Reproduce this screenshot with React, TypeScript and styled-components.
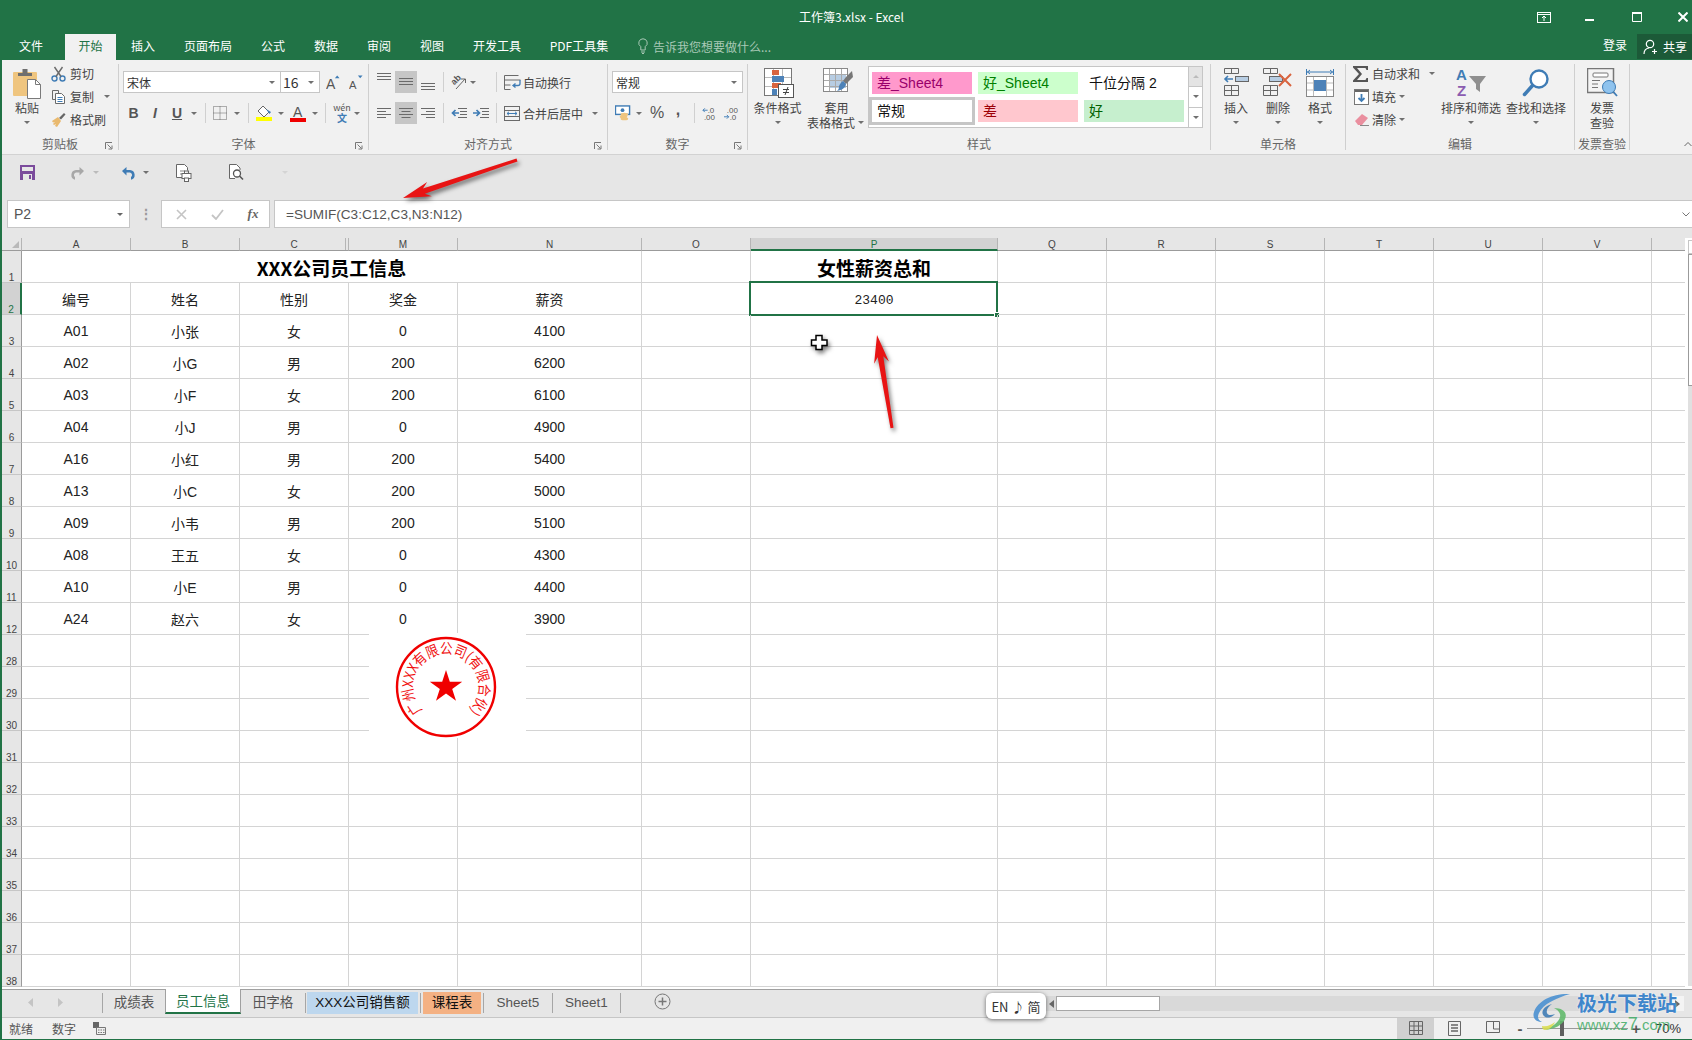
import React from "react";
import styled, { createGlobalStyle } from "styled-components";

const UI = `"Noto Sans CJK SC", "Liberation Sans", sans-serif`;
const CELL = `"Liberation Sans", "Noto Sans CJK SC", sans-serif`;
const GREEN = "#217346";

const Global = createGlobalStyle`
  html, body { margin: 0; padding: 0; overflow: hidden; background: #fff; }
  * { box-sizing: border-box; }
`;

const Win = styled.div`
  position: relative;
  width: 1692px;
  height: 1040px;
  overflow: hidden;
  border-left: 2px solid ${GREEN};
  font-family: ${UI};
  font-size: 12px;
  color: #444;
  background: #e6e6e6;
`;

/* ---------- title bar ---------- */
const Head = styled.header`
  background: ${GREEN};
  color: #fff;
  margin-left: -2px;
  padding-left: 2px;
`;
const TitleRow = styled.div`
  display: flex;
  align-items: center;
  height: 34px;
`;
const Title = styled.div`
  flex: 1;
  text-align: center;
  padding-left: 180px;
  line-height: 34px;
`;
const WinBtn = styled.span<{ $w: number; $ml?: number }>`
  display: inline-flex;
  flex: none;
  align-items: center;
  justify-content: center;
  height: 34px;
  width: ${(p) => p.$w}px;
  margin-left: ${(p) => p.$ml || 0}px;
`;
const TabsRow = styled.nav`
  display: flex;
  align-items: stretch;
  height: 26px;
`;
const MenuTab = styled.div<{ $w: number; $on?: boolean; $ml?: number }>`
  flex: none;
  width: ${(p) => p.$w}px;
  margin-left: ${(p) => p.$ml || 0}px;
  text-align: center;
  line-height: 23px;
  color: ${(p) => (p.$on ? GREEN : "#fff")};
  background: ${(p) => (p.$on ? "#f1f1f1" : "transparent")};
`;
const Tell = styled.div`
  display: flex;
  align-items: center;
  gap: 5px;
  margin-left: 16px;
  padding-bottom: 2px;
  color: #a9c9b6;
`;
const Login = styled.div`
  margin-left: auto;
  line-height: 22px;
  width: 44px;
  text-align: center;
`;
const Share = styled.div`
  display: flex;
  align-items: center;
  gap: 5px;
  width: 55px;
  height: 25px;
  padding-left: 6px;
  background: #1c5a38;
`;

/* ---------- ribbon ---------- */
const Ribbon = styled.section`
  display: flex;
  height: 95px;
  padding-top: 4px;
  background: #f1f1f1;
  border-bottom: 1px solid #d2d2d2;
`;
const Group = styled.div<{ $w: number }>`
  flex: none;
  display: flex;
  flex-direction: column;
  width: ${(p) => p.$w}px;
  height: 86px;
  border-right: 1px solid #cfcfcf;
`;
const Body = styled.div<{ $pl?: number; $pt?: number; $col?: boolean }>`
  display: flex;
  flex-direction: ${(p) => (p.$col ? "column" : "row")};
  gap: ${(p) => (p.$col ? "9px" : "0")};
  height: 72px;
  padding-left: ${(p) => p.$pl || 0}px;
  padding-top: ${(p) => p.$pt || 0}px;
`;
const Label = styled.div`
  position: relative;
  height: 14px;
  line-height: 15px;
  text-align: center;
  color: #666;
`;
const Launcher = styled.svg`
  position: absolute;
  right: 5px;
  top: 6px;
`;
const BigCol = styled.div<{ $w: number }>`
  flex: none;
  display: flex;
  flex-direction: column;
  align-items: center;
  width: ${(p) => p.$w}px;
  padding-top: 4px;
`;
const BigIcon = styled.div<{ $ml?: number }>`
  display: flex;
  align-items: flex-start;
  justify-content: center;
  height: 32px;
  margin-left: ${(p) => p.$ml || 0}px;
`;
const BigLine = styled.div`
  display: flex;
  align-items: center;
  justify-content: center;
  height: 15px;
  line-height: 15px;
  white-space: nowrap;
`;
const SmallCol = styled.div<{ $w: number; $pl: number }>`
  flex: none;
  display: flex;
  flex-direction: column;
  width: ${(p) => p.$w}px;
  padding-left: ${(p) => p.$pl}px;
  margin-top: -2px;
`;
const SmallRow = styled.div`
  display: flex;
  align-items: center;
  height: 23px;
  white-space: nowrap;
`;
const Row = styled.div`
  display: flex;
  align-items: center;
  height: 22px;
  white-space: nowrap;
`;
const Slot = styled.span<{ $w: number; $ml?: number; $on?: boolean }>`
  flex: none;
  display: inline-flex;
  align-items: center;
  justify-content: center;
  width: ${(p) => p.$w}px;
  height: 100%;
  margin-left: ${(p) => p.$ml || 0}px;
  background: ${(p) => (p.$on ? "#c6c6c6" : "transparent")};
`;
const Txt = styled.span<{ $ml?: number }>`
  margin-left: ${(p) => p.$ml || 0}px;
`;
const VSep = styled.span<{ $ml?: number }>`
  flex: none;
  width: 1px;
  height: 20px;
  margin-left: ${(p) => p.$ml || 0}px;
  background: #d0d0d0;
`;
const Caret = styled.i<{ $c?: string; $up?: boolean }>`
  display: inline-block;
  width: 0;
  height: 0;
  border-left: 3px solid transparent;
  border-right: 3px solid transparent;
  border-top: 3px solid ${(p) => p.$c || "#707070"};
  transform: ${(p) => (p.$up ? "rotate(180deg)" : "none")};
`;
const Combo = styled.div<{ $w: number; $ml?: number; $size?: boolean }>`
  flex: none;
  display: flex;
  align-items: center;
  justify-content: space-between;
  width: ${(p) => p.$w}px;
  height: 22px;
  margin-left: ${(p) => p.$ml || 0}px;
  padding: 0 5px 0 ${(p) => (p.$size ? "2px" : "3px")};
  background: #fff;
  border: 1px solid #c6c6c6;
  font-size: ${(p) => (p.$size ? "14px" : "12px")};
  color: #333;
`;
const Bold = styled.span<{ $i?: boolean; $u?: boolean }>`
  font: ${(p) => (p.$i ? "italic 700 14px" : "700 14px")} "Liberation Sans", sans-serif;
  text-decoration: ${(p) => (p.$u ? "underline" : "none")};
  color: #555;
`;
const PercentMark = styled.span`
  font: 16px "Liberation Sans", sans-serif;
  color: #555;
`;
const CommaMark = styled.span`
  font: 700 16px "Liberation Sans", sans-serif;
  color: #555;
  margin-top: -6px;
`;
const WenMark = styled.span`
  display: inline-flex;
  flex-direction: column;
  align-items: center;
  line-height: 9px;
  font-size: 9px;
  color: #555;
  & b { font-weight: 700; color: #3f7cb5; font-size: 10px; line-height: 11px; }
`;
const Gallery = styled.div`
  flex: none;
  display: flex;
  width: 335px;
  height: 62px;
  margin: 2px 0 0 2px;
  background: #fff;
  border: 1px solid #c6c6c6;
`;
const Styles = styled.div`
  flex: 1;
  display: grid;
  grid-template-columns: repeat(3, 100px);
  grid-auto-rows: 22px;
  gap: 6px;
  padding: 5px 0 0 3px;
`;
const StyleCell = styled.div<{ $bg: string; $fg: string; $frame?: boolean }>`
  padding-left: 5px;
  line-height: 22px;
  font-size: 14px;
  white-space: nowrap;
  font-family: ${CELL};
  background: ${(p) => p.$bg};
  color: ${(p) => p.$fg};
  box-shadow: ${(p) => (p.$frame ? "0 0 0 3px #c6c6c6" : "none")};
`;
const GalleryBar = styled.div`
  flex: none;
  display: flex;
  flex-direction: column;
  width: 14px;
  border-left: 1px solid #c6c6c6;
`;
const GalleryBtn = styled.div<{ $bg?: string }>`
  flex: 1;
  display: flex;
  align-items: center;
  justify-content: center;
  background: ${(p) => p.$bg || "#fff"};
  border-bottom: 1px solid #c6c6c6;
  &:last-child { border-bottom: 0; }
`;
const Collapse = styled.div`
  flex: 1;
  display: flex;
  justify-content: flex-end;
  align-items: flex-end;
  height: 86px;
  padding: 0 0 3px 0;
`;

/* ---------- quick access ---------- */
const Qat = styled.div`
  display: flex;
  align-items: center;
  height: 45px;
  padding-bottom: 10px;
  background: #e6e6e6;
`;
const QBtn = styled(Slot)`
  height: 20px;
`;

/* ---------- formula bar ---------- */
const FormulaRow = styled.div`
  display: flex;
  height: 28px;
  padding-left: 5px;
  margin-bottom: 10px;
  background: #e6e6e6;
`;
const NameBox = styled.div`
  flex: none;
  display: flex;
  align-items: center;
  justify-content: space-between;
  width: 123px;
  padding: 0 6px;
  background: #fff;
  border: 1px solid #c6c6c6;
  font: 14px "Liberation Sans", sans-serif;
  color: #555;
`;
const Dots = styled.div`
  flex: none;
  width: 31px;
  text-align: center;
  line-height: 26px;
  color: #9a9a9a;
  font-weight: 700;
  font-size: 14px;
`;
const FxBox = styled.div`
  flex: none;
  display: flex;
  align-items: center;
  width: 109px;
  background: #fff;
  border: 1px solid #c6c6c6;
`;
const FxMark = styled.span`
  font: italic 700 13px "Liberation Serif", serif;
  color: #666;
`;
const Formula = styled.div`
  flex: 1;
  margin-left: 4px;
  padding-left: 11px;
  display: flex;
  align-items: center;
  justify-content: space-between;
  padding-right: 2px;
  background: #fff;
  border-top: 1px solid #c6c6c6;
  border-bottom: 1px solid #c6c6c6;
  border-left: 1px solid #c6c6c6;
  font: 13.6px "Liberation Sans", sans-serif;
  color: #555;
`;

/* ---------- sheet ---------- */
const SheetWrap = styled.div`
  position: relative;
  display: flex;
  height: 752px;
  background: #fff;
  border-bottom: 1px solid #a0a0a0;
`;
const Grid = styled.div`
  flex: none;
  width: 1683px;
  height: 751px;
  overflow: hidden;
`;
const GridRow = styled.div<{ $h: number }>`
  display: flex;
  height: ${(p) => p.$h}px;
`;
const Corner = styled.div`
  position: relative;
  flex: none;
  width: 20px;
  background: #e6e6e6;
  border-right: 1px solid #b5b5b5;
  border-bottom: 1px solid #9b9b9b;
  &::after {
    content: "";
    position: absolute;
    right: 2px;
    bottom: 2px;
    border-left: 7px solid transparent;
    border-bottom: 7px solid #b9b9b9;
  }
`;
const ColHead = styled.div<{ $w: number; $on?: boolean; $dbl?: boolean }>`
  position: relative;
  flex: none;
  width: ${(p) => p.$w}px;
  text-align: center;
  font: 10px/14px "Liberation Sans", sans-serif;
  color: ${(p) => (p.$on ? GREEN : "#444")};
  background: ${(p) => (p.$on ? "#d2d2d2" : "#e6e6e6")};
  border-right: 1px solid #b5b5b5;
  border-bottom: ${(p) => (p.$on ? `2px solid ${GREEN}` : "1px solid #9b9b9b")};
  &::after {
    content: "";
    display: ${(p) => (p.$dbl ? "block" : "none")};
    position: absolute;
    right: 2px;
    top: 0;
    bottom: 0;
    width: 1px;
    background: #b5b5b5;
  }
`;
const RowHead = styled.div<{ $on?: boolean }>`
  flex: none;
  width: 20px;
  display: flex;
  align-items: flex-end;
  justify-content: center;
  font: 10px/9px "Liberation Sans", sans-serif;
  color: ${(p) => (p.$on ? GREEN : "#444")};
  background: ${(p) => (p.$on ? "#d2d2d2" : "#e6e6e6")};
  border-right: ${(p) => (p.$on ? `2px solid ${GREEN}` : "1px solid #9b9b9b")};
  border-bottom: 1px solid #c6c6c6;
`;
const Cell = styled.div<{ $w: number; $last?: boolean }>`
  position: relative;
  flex: none;
  display: flex;
  align-items: center;
  justify-content: center;
  width: ${(p) => p.$w}px;
  padding-top: 1px;
  font: 14px ${CELL};
  color: #222;
  border-right: 1px solid ${(p) => (p.$last ? "#9b9b9b" : "#d4d4d4")};
  border-bottom: 1px solid #d4d4d4;
`;
const SheetTitle = styled.span`
  font: 700 19px ${UI};
  color: #000;
`;
const SumValue = styled.span`
  margin-top: 3px;
  font: 13px "Liberation Mono", monospace;
  color: #222;
`;
const SelFrame = styled.div`
  position: absolute;
  inset: -2px -1px -2px -2px;
  border: 2px solid ${GREEN};
  pointer-events: none;
`;
const SelHandle = styled.div`
  position: absolute;
  right: -4px;
  bottom: -4px;
  background: ${GREEN};
  border: 1px solid #fff;
  box-sizing: content-box;
  width: 4px;
  height: 4px;
`;
const VScroll = styled.div`
  flex: none;
  display: flex;
  flex-direction: column;
  width: 7px;
  height: 746px;
  margin-top: 2px;
  padding-left: 3px;
  background: #fff;
`;
const VBtn = styled.div`
  height: 14px;
  background: #fff;
  border: 1px solid #c6c6c6;
  border-right: 0;
`;
const VThumb = styled.div`
  height: 132px;
  background: #fff;
  border: 1px solid #9b9b9b;
  border-right: 0;
`;
const VRest = styled.div`
  flex: 1;
  background: #e0e0e0;
`;

/* ---------- sheet tabs ---------- */
const TabsBar = styled.div`
  position: relative;
  display: flex;
  align-items: stretch;
  height: 28px;
  background: #e6e6e6;
  border-bottom: 1px solid #c6c6c6;
`;
const NavArea = styled.div`
  flex: none;
  display: flex;
  align-items: center;
  width: 100px;
  padding-bottom: 3px;
`;
const TabSep = styled.span<{ $ml?: number }>`
  flex: none;
  align-self: flex-start;
  width: 1px;
  height: 20px;
  margin-top: 3px;
  margin-left: ${(p) => p.$ml || 0}px;
  background: #a6a6a6;
`;
const SheetTab = styled.div<{ $w: number; $bg?: string; $on?: boolean; $ml?: number; $c?: string }>`
  flex: none;
  align-self: flex-start;
  width: ${(p) => p.$w}px;
  height: ${(p) => (p.$on ? "25px" : "22px")};
  margin-top: ${(p) => (p.$bg ? "2px" : p.$on ? "-1px" : "1px")};
  margin-left: ${(p) => p.$ml || 0}px;
  text-align: center;
  line-height: ${(p) => (p.$on ? "26px" : p.$bg ? "22px" : "24px")};
  font-size: 13.5px;
  font-family: ${CELL};
  color: ${(p) => (p.$on ? GREEN : p.$c || "#555")};
  background: ${(p) => (p.$on ? "#fff" : p.$bg || "transparent")};
  border-left: ${(p) => (p.$on ? "1px solid #a0a0a0" : "0")};
  border-right: ${(p) => (p.$on ? "1px solid #a0a0a0" : "0")};
  border-bottom: ${(p) => (p.$on ? `2px solid ${GREEN}` : "0")};
`;
const AddSheet = styled.div`
  flex: none;
  margin-left: 33px;
  padding-top: 3px;
`;
const HScroll = styled.div`
  position: absolute;
  left: 984px;
  top: 6px;
  width: 698px;
  height: 15px;
  display: flex;
  align-items: stretch;
  background: #d9d9d9;
`;
const HBtn = styled.div<{ $w: number; $ml?: string; $bg?: string }>`
  flex: none;
  display: flex;
  align-items: center;
  justify-content: center;
  width: ${(p) => p.$w}px;
  margin-left: ${(p) => p.$ml || "0"};
  background: ${(p) => p.$bg || "transparent"};
`;
const HThumb = styled.div`
  flex: none;
  width: 104px;
  background: #fff;
  border: 1px solid #a6a6a6;
`;
const Ime = styled.div`
  position: absolute;
  left: 984px;
  top: 3px;
  width: 60px;
  height: 26px;
  display: flex;
  align-items: center;
  justify-content: center;
  gap: 3px;
  background: #fff;
  border-radius: 6px;
  box-shadow: 0 1px 4px rgba(0, 0, 0, 0.55);
  font-size: 13px;
  color: #333;
`;

/* ---------- status ---------- */
const Status = styled.footer`
  display: flex;
  align-items: center;
  height: 22px;
  padding-left: 7px;
  padding-bottom: 1px;
  background: #f0f0f0;
  border-bottom: 1px solid ${GREEN};
  color: #555;
`;
const ViewBtn = styled.div<{ $on?: boolean; $ml?: number }>`
  flex: none;
  display: flex;
  align-items: center;
  justify-content: center;
  width: 37px;
  height: 21px;
  margin-left: ${(p) => p.$ml || 0}px;
  background: ${(p) => (p.$on ? "#d0d0d0" : "transparent")};
`;
const ZoomTrack = styled.div`
  position: relative;
  flex: none;
  width: 101px;
  height: 1px;
  margin-left: 2px;
  background: #9a9a9a;
`;
const ZoomThumb = styled.div`
  position: absolute;
  left: 33px;
  top: -7px;
  width: 4px;
  height: 15px;
  background: #5f5f5f;
`;
const ZoomSign = styled.span<{ $w: number; $ml?: number }>`
  flex: none;
  width: ${(p) => p.$w}px;
  margin-left: ${(p) => p.$ml || 0}px;
  text-align: center;
  font: 700 15px "Liberation Sans", sans-serif;
  color: #555;
`;
const ZoomPct = styled.span`
  margin-left: 13px;
  font: 13px "Liberation Sans", sans-serif;
  color: #333;
`;

/* ---------- overlays ---------- */
const StampBox = styled.div`
  position: absolute;
  left: 367px;
  top: 633px;
  width: 157px;
  height: 105px;
  background: #fff;
`;
const Overlay = styled.svg`
  position: absolute;
  left: -2px;
  top: 0;
  pointer-events: none;
  filter: drop-shadow(2px 3px 2px rgba(0, 0, 0, 0.5));
`;
const Watermark = styled.div`
  position: absolute;
  left: 1528px;
  top: 992px;
  display: flex;
  pointer-events: none;
`;
const WmText = styled.div`
  display: flex;
  flex-direction: column;
  margin-left: 3px;
`;
const WmName = styled.div`
  font: 700 20px/21px ${UI};
  color: #3f86cb;
  text-shadow: 0 0 2px #fff;
  white-space: nowrap;
`;
const WmUrl = styled.div`
  margin-top: 1px;
  font: 15px/20px "Liberation Sans", sans-serif;
  color: rgba(62, 170, 100, 0.85);
  white-space: nowrap;
  & b { font-weight: 400; font-size: 18px; }
`;

/* ---------- icons ---------- */
const S = ({ w, h, children }: { w: number; h: number; children: React.ReactNode }) => (
  <svg width={w} height={h} viewBox={`0 0 ${w} ${h}`} fill="none">{children}</svg>
);
const L = "#6a6a6a";
const B = "#3f7cb5";

const IcPaste = () => (
  <S w={30} h={31}>
    <rect x="1" y="4" width="24" height="24" rx="1" fill="#efc57f" />
    <path d="M6 8V5h4.500V1h5v4H20v3z" fill="#6f6f6f" />
    <path d="M15.500 11.500h8l5 5v14h-13z" fill="#fff" stroke="#7a7a7a" />
    <path d="M23.500 11.500v5h5" stroke="#7a7a7a" />
  </S>
);
const IcCut = () => (
  <S w={15} h={16}>
    <circle cx="3.500" cy="12.500" r="2.500" stroke={B} strokeWidth="1.400" />
    <circle cx="11.500" cy="12.500" r="2.500" stroke={B} strokeWidth="1.400" />
    <path d="M5 10.500 11.500 1M10 10.500 3.500 1" stroke="#6a6a6a" strokeWidth="1.400" />
  </S>
);
const IcCopy = () => (
  <S w={15} h={15}>
    <path d="M1.500 1.500h6v3M1.500 1.500v9h3" stroke={L} />
    <path d="M4.500 4.500h6l3 3v7h-9z" fill="#fff" stroke={L} />
    <path d="M6.500 8.500h5M6.500 10.500h5M6.500 12.500h5" stroke={B} />
  </S>
);
const IcBrush = () => (
  <S w={16} h={15}>
    <path d="M9 6 14 1l1.500 1.500L11 7.500z" fill="#666" />
    <path d="M2 9 8 5l3 4-4 6-2-1 1-2-2 1-1-1 2-2-2 .5z" fill="#e9b96e" />
  </S>
);
const IcGrow = ({ up }: { up: boolean }) => (
  <S w={15} h={17}>
    <text x="0" y="15" fontFamily="Liberation Sans" fontSize={up ? 15 : 12} fill="#555">A</text>
    <path d={up ? "M9.500 4l2.500-3 2.500 3z" : "M9.500 1h5L12 4z"} fill={B} />
  </S>
);
const IcBorder = () => (
  <S w={14} h={14}>
    <path d="M.5.500h13v13H.5zM7 .5v13M.5 7h13" stroke="#666" strokeDasharray="1 1" />
  </S>
);
const IcFill = () => (
  <S w={18} h={16}>
    <path d="M8 1 14 7 9 12 3 6z" fill="#fff" stroke="#666" />
    <path d="M11 4l5 3-1.500 2z" fill={B} />
    <rect x="1" y="12" width="16" height="4" fill="#ffff00" />
  </S>
);
const IcFontColor = () => (
  <S w={17} h={17}>
    <text x="3" y="12" fontFamily="Liberation Sans" fontSize="14" fill="#555">A</text>
    <rect x="0" y="13" width="16" height="4" fill="#f00000" />
  </S>
);
const IcLines = ({ ws, align = "l", w = 15, gap = 3 }: { ws: number[]; align?: "l" | "c" | "r"; w?: number; gap?: number }) => {
  const h = (ws.length - 1) * gap + 1;
  return (
    <S w={w} h={h}>
      {ws.map((l, i) => {
        const x = align === "l" ? 0 : align === "c" ? (w - l) / 2 : w - l;
        return <rect key={i} x={x} y={i * gap} width={l} height="1" fill={L} />;
      })}
    </S>
  );
};
const IcVAlign = ({ mt }: { mt: number }) => (
  <svg width="14" height="22" viewBox="0 0 14 22" fill="none">
    <path d={`M0 ${mt + 0.5}h14M0 ${mt + 3.5}h14M0 ${mt + 6.5}h14`} stroke={L} />
  </svg>
);
const IcOrient = () => (
  <S w={16} h={16}>
    <text x="1" y="10" transform="rotate(-45 4 8)" fontFamily="Liberation Sans" fontWeight="700" fontSize="9" fill="#555">ab</text>
    <path d="M5 15 14 5M10 5h4.500v4" stroke="#666" />
  </S>
);
const IcWrap = () => (
  <S w={17} h={15}>
    <path d="M.5.500h14M.5.500v14h6M.5 5h16M.5 10h6" stroke={L} />
    <path d="M16 5v3.500a2 2 0 0 1-2 2H9M11.500 8.500 9 10.500l2.500 2" stroke={B} strokeWidth="1.300" />
  </S>
);
const IcMerge = () => (
  <S w={16} h={15}>
    <rect x=".5" y=".5" width="15" height="14" stroke={L} />
    <path d="M.5 4.500h15M.5 10.500h15" stroke={L} />
    <path d="M3 7.500h10M5 5.800 3 7.500l2 1.700M11 5.800l2 1.700-2 1.700" stroke={B} />
  </S>
);
const IcIndent = ({ out }: { out: boolean }) => (
  <S w={16} h={11}>
    <path d="M7 .5h9M9 3.500h7M9 6.500h7M7 9.500h9" stroke={L} />
    {out ? (
      <path d="M8 5H1.500M4.500 2 1.500 5l3 3" stroke={B} strokeWidth="1.700" />
    ) : (
      <path d="M0 5h6.500M3.500 2l3 3-3 3" stroke={B} strokeWidth="1.700" />
    )}
  </S>
);
const IcCurrency = () => (
  <S w={17} h={16}>
    <rect x="0.5" y="0.5" width="15" height="9" fill="#fff" stroke={B} strokeWidth="1.500" />
    <circle cx="8" cy="5" r="2" fill={B} />
    <ellipse cx="10" cy="9.500" rx="4" ry="1.800" fill="#efc57f" />
    <ellipse cx="9" cy="12" rx="4" ry="1.800" fill="#efc57f" />
    <ellipse cx="10" cy="14.200" rx="4" ry="1.600" fill="#efc57f" />
  </S>
);
const IcDec = ({ inc }: { inc: boolean }) => (
  <S w={16} h={15}>
    <text x={inc ? 6 : 3} y="6.500" fontFamily="Liberation Sans" fontSize="8.500" fill="#555">{inc ? ".0" : ".00"}</text>
    <text x={inc ? 2 : 6} y="14" fontFamily="Liberation Sans" fontSize="8.500" fill="#555">{inc ? ".00" : ".0"}</text>
    {inc ? <path d="M6 4H1M3 2 1 4l2 2" stroke={B} /> : <path d="M0 11h5M3 9l2 2-2 2" stroke={B} />}
  </S>
);
const IcCond = () => (
  <S w={31} h={31}>
    <rect x=".5" y=".5" width="27" height="27" fill="#fff" stroke="#777" />
    <path d="M9.500 1v26M18.500 1v26M1 9.500h26M1 18.500h26" stroke="#bbb" />
    <rect x="8" y="2" width="7" height="5" fill="#d8643f" />
    <rect x="8" y="8" width="12" height="6" fill="#4d82b8" />
    <rect x="8" y="15" width="9" height="5" fill="#d8643f" />
    <rect x="8" y="21" width="5" height="6" fill="#4d82b8" />
    <rect x="14.500" y="16.500" width="15" height="13" fill="#fff" stroke="#555" />
    <path d="M19 21.500h6M19 24.500h6M24 19l-3 8" stroke="#444" />
  </S>
);
const IcTable = () => (
  <S w={30} h={31}>
    <rect x=".5" y=".5" width="24" height="23" fill="#fff" stroke="#888" />
    <rect x="7" y="7" width="16" height="13" fill="#b7cde3" />
    <path d="M6.500 1v22M12.500 1v22M18.500 1v22M1 6.500h23M1 12.500h23M1 18.500h23" stroke="#aaa" />
    <path d="M23 9l6-6 1 6-7 7-3-3z" fill="#777" />
    <path d="M20 13l3 3c-1 4-4 6-9 7 2-2 2-3 2-5 1-2 2-4 4-5z" fill="#4d82b8" />
  </S>
);
const IcInsert = () => (
  <S w={27} h={28}>
    <path d="M1.500.5h14v5h-14zM8.500.5v5M1.500 17.500h14v10h-14zM1.500 22.500h14M8.500 17.500v10" stroke="#666" />
    <rect x="12.500" y="8.500" width="13" height="5" fill="#b7cde3" stroke="#666" />
    <path d="M10 11H2M5 8l-3 3 3 3" stroke={B} strokeWidth="1.600" />
  </S>
);
const IcDelete = () => (
  <S w={30} h={28}>
    <path d="M.5.500h14v5h-14zM7.500.5v5M.5 17.500h14v10h-14zM.5 22.500h14M7.500 17.500v10" stroke="#666" />
    <rect x="6.500" y="8.500" width="13" height="5" fill="#b7cde3" stroke="#666" />
    <path d="M16 6l12 12M28 6 16 18" stroke="#d9643f" strokeWidth="2" />
  </S>
);
const IcFormat = () => (
  <S w={28} h={30}>
    <path d="M.5 1v6M27.500 1v6M1 4h26M4 2 1.500 4 4 6M24 2l2.500 2L24 6" stroke={B} />
    <rect x=".5" y="8.500" width="27" height="20" fill="#fff" stroke="#888" />
    <path d="M7.500 9v19M20.500 9v19M1 15h26M1 22h26" stroke="#bbb" />
    <rect x="8" y="12" width="12" height="11" fill="#4d82b8" />
  </S>
);
const IcSigma = () => (
  <S w={16} h={16}>
    <path d="M0 0h15v4h-1.500l-1-2H4l5 6-5 6h8.500l1-2H15v4H0v-1.500L6 8 0 1.500z" fill="#555" />
  </S>
);
const IcFillDown = () => (
  <S w={15} h={16}>
    <rect x=".5" y=".5" width="14" height="15" fill="#fff" stroke="#777" />
    <rect x="1" y="1" width="13" height="2" fill="#666" />
    <path d="M7.500 5v7M4.500 9l3 3 3-3" stroke={B} strokeWidth="1.800" />
  </S>
);
const IcEraser = () => (
  <S w={15} h={13}>
    <path d="M1 8 8 1l6 4-6 7H4z" fill="#ea8f9f" />
    <path d="M6 12.500h9" stroke="#888" />
  </S>
);
const IcSort = () => (
  <S w={31} h={30}>
    <text x="0" y="12" fontFamily="Liberation Sans" fontWeight="700" fontSize="15" fill={B}>A</text>
    <text x="1" y="28" fontFamily="Liberation Sans" fontWeight="700" fontSize="15" fill="#8b5cb0">Z</text>
    <path d="M13 8h17l-6 8v8l-4-3v-5z" fill="#8f8f8f" />
  </S>
);
const IcFind = () => (
  <S w={28} h={30}>
    <circle cx="17" cy="11" r="8.500" fill="#fff" stroke={B} strokeWidth="2.400" />
    <path d="M10.500 17.500 2.500 26.500" stroke={B} strokeWidth="3.500" strokeLinecap="round" />
  </S>
);
const IcInvoice = () => (
  <S w={31} h={30}>
    <rect x=".5" y=".5" width="26" height="24" fill="#f4f4f4" stroke="#777" strokeWidth="1.500" />
    <rect x="6" y="5" width="15" height="4" rx="1" fill="#fff" stroke="#777" />
    <path d="M5 12.500h8M5 16h6M5 19.500h6" stroke="#777" />
    <circle cx="22" cy="19" r="6.500" fill="#8fc3ee" stroke={B} />
    <path d="M26.500 24l3.500 4" stroke={B} strokeWidth="1.800" />
  </S>
);
const IcBulb = () => (
  <S w={10} h={16}>
    <path d="M5 .8a4.200 4.200 0 0 0-2.200 7.800V12h4.400V8.600A4.200 4.200 0 0 0 5 .8zM3 14h4M4 15.500h2" stroke="#a9c9b6" />
  </S>
);
const IcPerson = () => (
  <S w={15} h={16}>
    <circle cx="7" cy="5" r="3.700" stroke="#fff" strokeWidth="1.200" />
    <path d="M1 15c0-3 2-5.500 5-6M11.500 10v5M9 12.500h5" stroke="#fff" strokeWidth="1.200" />
  </S>
);
const IcSave = () => (
  <S w={15} h={15}>
    <path d="M0 0h15v15H0z" fill="#7b4b9c" />
    <rect x="2" y="2" width="11" height="4" fill="#e6e6e6" />
    <rect x="3" y="9" width="9" height="6" fill="#e6e6e6" />
    <rect x="9" y="10" width="2" height="4" fill="#7b4b9c" />
  </S>
);
const IcRedo = () => (
  <S w={15} h={14}>
    <path d="M14 5 9.500 1v3H6a5 5 0 0 0-1 9.800V11a2.500 2.500 0 0 1 1-4.500h3.500v3z" fill="#a8a8a8" />
  </S>
);
const IcUndo = () => (
  <S w={15} h={14}>
    <path d="M1 5l4.500-4v3H9a5 5 0 0 1 1 9.800V11a2.500 2.500 0 0 0-1-4.500H5.500v3z" fill={B} />
  </S>
);
const IcPrintPrev = () => (
  <S w={17} h={18}>
    <path d="M8 13.500H1.500V.5h8l3 3v3" stroke="#666" fill="#fff" />
    <path d="M5 7h5M5 10h3" stroke="#888" />
    <rect x="7" y="9.500" width="9" height="5" fill="#fff" stroke="#666" />
    <rect x="9.500" y="7" width="4" height="2.500" stroke="#666" />
    <rect x="9.500" y="14" width="4" height="3.500" fill="#fff" stroke="#666" />
  </S>
);
const IcPreview = () => (
  <S w={15} h={17}>
    <path d="M6 14.500H.5V.5h7l3.500 3.500v2" stroke="#666" fill="#fff" />
    <circle cx="8" cy="9.500" r="3.500" stroke="#555" strokeWidth="1.300" fill="#fff" />
    <path d="M10.500 12l3.500 3.500" stroke="#555" strokeWidth="1.600" />
  </S>
);
const LauncherIcon = () => (
  <Launcher width="8" height="8" viewBox="0 0 8 8" fill="none">
    <path d="M.5 7V.5H7" stroke="#777" />
    <path d="M2.500 2.500 6.500 6.500M7 3.500V7H3.500" stroke="#777" />
  </Launcher>
);

const COLS = [
  { k: "A", w: 109 }, { k: "B", w: 109 }, { k: "C", w: 109, dbl: true }, { k: "M", w: 109 }, { k: "N", w: 184 },
  { k: "O", w: 109 }, { k: "P", w: 247 }, { k: "Q", w: 109 }, { k: "R", w: 109 }, { k: "S", w: 109 },
  { k: "T", w: 109 }, { k: "U", w: 109 }, { k: "V", w: 109 }, { k: "", w: 34 },
];
const lastIdx = COLS.length - 1;
const DATA = [
  ["编号", "姓名", "性别", "奖金", "薪资"],
  ["A01", "小张", "女", "0", "4100"],
  ["A02", "小G", "男", "200", "6200"],
  ["A03", "小F", "女", "200", "6100"],
  ["A04", "小J", "男", "0", "4900"],
  ["A16", "小红", "男", "200", "5400"],
  ["A13", "小C", "女", "200", "5000"],
  ["A09", "小韦", "男", "200", "5100"],
  ["A08", "王五", "女", "0", "4300"],
  ["A10", "小E", "男", "0", "4400"],
  ["A24", "赵六", "女", "0", "3900"],
];
const EMPTY_ROWS = [28, 29, 30, 31, 32, 33, 34, 35, 36, 37, 38];
const titleW = COLS.slice(0, 5).reduce((a, c) => a + c.w, 0);

const Sheet = () => (
  <Grid>
    <GridRow $h={13}>
      <Corner />
      {COLS.map((c, i) => (
        <ColHead key={i} $w={c.w} $on={c.k === "P"} $dbl={c.dbl}>{c.k}</ColHead>
      ))}
    </GridRow>
    <GridRow $h={32}>
      <RowHead>1</RowHead>
      <Cell $w={titleW}><SheetTitle>XXX公司员工信息</SheetTitle></Cell>
      {COLS.slice(5).map((c, i) => (
        <Cell key={i} $w={c.w} $last={i + 5 === lastIdx}>
          {c.k === "P" && <SheetTitle>女性薪资总和</SheetTitle>}
        </Cell>
      ))}
    </GridRow>
    {DATA.map((r, ri) => (
      <GridRow $h={32} key={ri}>
        <RowHead $on={ri === 0}>{ri + 2}</RowHead>
        {COLS.map((c, i) => (
          <Cell key={i} $w={c.w} $last={i === lastIdx}>
            {i < 5 && r[i]}
            {ri === 0 && c.k === "P" && (
              <>
                <SumValue>23400</SumValue>
                <SelFrame><SelHandle /></SelFrame>
              </>
            )}
          </Cell>
        ))}
      </GridRow>
    ))}
    {EMPTY_ROWS.map((n) => (
      <GridRow $h={32} key={n}>
        <RowHead>{n}</RowHead>
        {COLS.map((c, i) => <Cell key={i} $w={c.w} $last={i === lastIdx} />)}
      </GridRow>
    ))}
  </Grid>
);

const starPoints = (cx: number, cy: number, R: number) => {
  const r = R * 0.382;
  const pts: string[] = [];
  for (let i = 0; i < 10; i++) {
    const a = (-90 + i * 36) * (Math.PI / 180);
    const q = i % 2 ? r : R;
    pts.push(`${(cx + q * Math.cos(a)).toFixed(1)},${(cy + q * Math.sin(a)).toFixed(1)}`);
  }
  return pts.join(" ");
};

const Stamp = () => (
  <StampBox>
    <svg width="157" height="105" viewBox="0 0 157 105" fill="none">
      <defs>
        <path id="stamp-arc" d="M 53.700 77.300 A 33 33 0 1 1 100.300 77.300" />
      </defs>
      <circle cx="77" cy="54" r="49" stroke="#f00000" strokeWidth="2.400" />
      <text fontFamily="Noto Sans CJK SC" fontSize="14.500" fill="#f01010">
        <textPath href="#stamp-arc" textLength="155" lengthAdjust="spacingAndGlyphs">广州XXX有限公司(有限合伙)</textPath>
      </text>
      <polygon points={starPoints(77, 54, 17)} fill="#f00000" />
    </svg>
  </StampBox>
);

const arrowPoints = (x1: number, y1: number, x2: number, y2: number) => {
  const dx = x2 - x1, dy = y2 - y1;
  const len = Math.hypot(dx, dy);
  const ux = dx / len, uy = dy / len, nx = -uy, ny = ux;
  const at = (t: number, o: number) => `${(x1 + ux * t + nx * o).toFixed(1)},${(y1 + uy * t + ny * o).toFixed(1)}`;
  return [at(0, -1.5), at(len - 22, -2.8), at(len - 28, -7.5), at(len, 0), at(len - 28, 7.5), at(len - 22, 2.8), at(0, 1.5)].join(" ");
};

const Arrows = () => (
  <Overlay width="1692" height="1040" viewBox="0 0 1692 1040" fill="none">
    <polygon points={arrowPoints(517, 160, 403, 198)} fill="#e81414" />
    <polygon points={arrowPoints(892, 428, 877, 335)} fill="#e81414" />
    <path d="M816 335.500h6v4.500h5v5.500h-5v4h-6v-4h-4.500v-5.500h4.500z" fill="#fff" stroke="#000" strokeWidth="1.500" />
  </Overlay>
);

const Logo = () => (
  <svg width="44" height="40" viewBox="0 0 44 40" fill="none">
    <path d="M40 2C24 1 8 8 4 20c-2 6 2 10 8 10-4-2-5-5-3-9C13 12 26 6 40 2z" fill="#4a90d0" opacity=".9" />
    <path d="M22 12C14 14 10 20 14 24c3 3 9 1 11-2-3 1-7 2-8-1-1-3 1-6 5-9z" fill="#3f7cb5" opacity=".9" />
    <path d="M24 16c8 0 14 4 11 11-2 6-11 10-20 11 8-4 14-8 15-13 1-4-2-7-6-9z" fill="#62b96c" opacity=".9" />
    <path d="M12 34c5 1 9-1 13-4-2 4-5 8-10 8-2 0-3-2-3-4z" fill="#d8dc4f" opacity=".9" />
  </svg>
);

export default function App() {
  return (
    <Win>
      <Global />
      <Head>
        <TitleRow>
          <Title>工作簿3.xlsx - Excel</Title>
          <WinBtn $w={46}>
            <S w={14} h={11}>
              <rect x=".5" y=".5" width="13" height="10" stroke="#fff" />
              <path d="M.5 2.500h13M7 9V4M5 6l2-2 2 2" stroke="#fff" />
            </S>
          </WinBtn>
          <WinBtn $w={46}><S w={10} h={10}><rect x="0" y="7" width="9" height="2" fill="#fff" /></S></WinBtn>
          <WinBtn $w={46} $ml={1}><S w={10} h={10}><path d="M.5 1.500h9v8h-9z" stroke="#fff" strokeWidth="1" /><rect x="0" y="0" width="10" height="2" fill="#fff" /></S></WinBtn>
          <WinBtn $w={18} $ml={14}><S w={10} h={10}><path d="M.5.500l9 9M9.500.500l-9 9" stroke="#fff" strokeWidth="2" /></S></WinBtn>
        </TitleRow>
        <TabsRow>
          <MenuTab $w={58}>文件</MenuTab>
          <MenuTab $w={51} $ml={5} $on>开始</MenuTab>
          <MenuTab $w={54}>插入</MenuTab>
          <MenuTab $w={76}>页面布局</MenuTab>
          <MenuTab $w={54}>公式</MenuTab>
          <MenuTab $w={52}>数据</MenuTab>
          <MenuTab $w={54}>审阅</MenuTab>
          <MenuTab $w={52}>视图</MenuTab>
          <MenuTab $w={78}>开发工具</MenuTab>
          <MenuTab $w={86}>PDF工具集</MenuTab>
          <Tell><IcBulb />告诉我您想要做什么...</Tell>
          <Login>登录</Login>
          <Share><IcPerson />共享</Share>
        </TabsRow>
      </Head>

      <Ribbon>
        <Group $w={117}>
          <Body $pl={10}>
            <BigCol $w={30}>
              <BigIcon><IcPaste /></BigIcon>
              <BigLine>粘贴</BigLine>
              <BigLine><Caret /></BigLine>
            </BigCol>
            <SmallCol $w={70} $pl={8}>
              <SmallRow><Slot $w={16}><IcCut /></Slot><Txt $ml={4}>剪切</Txt></SmallRow>
              <SmallRow><Slot $w={16}><IcCopy /></Slot><Txt $ml={4}>复制</Txt><Slot $w={8} $ml={9}><Caret /></Slot></SmallRow>
              <SmallRow><Slot $w={16}><IcBrush /></Slot><Txt $ml={4}>格式刷</Txt></SmallRow>
            </SmallCol>
          </Body>
          <Label>剪贴板<LauncherIcon /></Label>
        </Group>

        <Group $w={250}>
          <Body $col $pl={4} $pt={7}>
            <Row>
              <Combo $w={158}>宋体<Caret /></Combo>
              <Combo $w={40} $ml={-1} $size>16<Caret /></Combo>
              <Slot $w={14} $ml={6}><IcGrow up /></Slot>
              <Slot $w={14} $ml={9}><IcGrow up={false} /></Slot>
            </Row>
            <Row>
              <Slot $w={21}><Bold>B</Bold></Slot>
              <Slot $w={22}><Bold $i>I</Bold></Slot>
              <Slot $w={22}><Bold $u>U</Bold></Slot>
              <Slot $w={12}><Caret /></Slot>
              <VSep $ml={5} />
              <Slot $w={28}><IcBorder /></Slot>
              <Slot $w={6}><Caret /></Slot>
              <VSep $ml={8} />
              <Slot $w={30}><IcFill /></Slot>
              <Slot $w={4}><Caret /></Slot>
              <Slot $w={30}><IcFontColor /></Slot>
              <Slot $w={3}><Caret /></Slot>
              <VSep $ml={9} />
              <Slot $w={26} $ml={3}><WenMark>wén<b>文</b></WenMark></Slot>
              <Slot $w={4}><Caret /></Slot>
            </Row>
          </Body>
          <Label>字体<LauncherIcon /></Label>
        </Group>

        <Group $w={239}>
          <Body $col $pl={8} $pt={7}>
            <Row>
              <Slot $w={14}><IcVAlign mt={2} /></Slot>
              <Slot $w={22} $ml={4} $on><IcVAlign mt={7} /></Slot>
              <Slot $w={14} $ml={4}><IcVAlign mt={12} /></Slot>
              <VSep $ml={8} />
              <Slot $w={16} $ml={7}><IcOrient /></Slot>
              <Slot $w={12}><Caret /></Slot>
              <VSep $ml={17} />
              <Slot $w={17} $ml={7}><IcWrap /></Slot>
              <Txt $ml={2}>自动换行</Txt>
            </Row>
            <Row>
              <Slot $w={14}><IcLines ws={[14, 9, 14, 9]} w={14} /></Slot>
              <Slot $w={22} $ml={4} $on><IcLines ws={[14, 9, 14, 9]} w={14} align="c" /></Slot>
              <Slot $w={14} $ml={4}><IcLines ws={[14, 9, 14, 9]} w={14} align="r" /></Slot>
              <VSep $ml={8} />
              <Slot $w={16} $ml={7}><IcIndent out /></Slot>
              <Slot $w={16} $ml={6}><IcIndent out={false} /></Slot>
              <VSep $ml={7} />
              <Slot $w={16} $ml={7}><IcMerge /></Slot>
              <Txt $ml={3}>合并后居中</Txt>
              <Slot $w={12} $ml={6}><Caret /></Slot>
            </Row>
          </Body>
          <Label>对齐方式<LauncherIcon /></Label>
        </Group>

        <Group $w={140}>
          <Body $col $pl={4} $pt={7}>
            <Row><Combo $w={131}>常规<Caret /></Combo></Row>
            <Row>
              <Slot $w={16} $ml={3}><IcCurrency /></Slot>
              <Slot $w={16}><Caret /></Slot>
              <Slot $w={16} $ml={2}><PercentMark>%</PercentMark></Slot>
              <Slot $w={10} $ml={8}><CommaMark>,</CommaMark></Slot>
              <VSep $ml={11} />
              <Slot $w={15} $ml={7}><IcDec inc /></Slot>
              <Slot $w={15} $ml={7}><IcDec inc={false} /></Slot>
            </Row>
          </Body>
          <Label>数字<LauncherIcon /></Label>
        </Group>

        <Group $w={463}>
          <Body>
            <BigCol $w={59}>
              <BigIcon $ml={3}><IcCond /></BigIcon>
              <BigLine>条件格式</BigLine>
              <BigLine><Caret /></BigLine>
            </BigCol>
            <BigCol $w={59}>
              <BigIcon $ml={2}><IcTable /></BigIcon>
              <BigLine>套用</BigLine>
              <BigLine>表格格式<Slot $w={11}><Caret /></Slot></BigLine>
            </BigCol>
            <Gallery>
              <Styles>
                <StyleCell $bg="#ff99cc" $fg="#99006b">差_Sheet4</StyleCell>
                <StyleCell $bg="#ccffcc" $fg="#008000">好_Sheet4</StyleCell>
                <StyleCell $bg="#fff" $fg="#111">千位分隔 2</StyleCell>
                <StyleCell $bg="#fff" $fg="#111" $frame>常规</StyleCell>
                <StyleCell $bg="#ffc7ce" $fg="#9c0006">差</StyleCell>
                <StyleCell $bg="#c6efce" $fg="#006100">好</StyleCell>
              </Styles>
              <GalleryBar>
                <GalleryBtn $bg="#e4e4e4"><Caret $c="#bbb" $up /></GalleryBtn>
                <GalleryBtn><Caret /></GalleryBtn>
                <GalleryBtn><Caret /></GalleryBtn>
              </GalleryBar>
            </Gallery>
          </Body>
          <Label>样式</Label>
        </Group>

        <Group $w={135}>
          <Body $pl={4}>
            <BigCol $w={42}>
              <BigIcon><IcInsert /></BigIcon>
              <BigLine>插入</BigLine>
              <BigLine><Caret /></BigLine>
            </BigCol>
            <BigCol $w={42}>
              <BigIcon><IcDelete /></BigIcon>
              <BigLine>删除</BigLine>
              <BigLine><Caret /></BigLine>
            </BigCol>
            <BigCol $w={42}>
              <BigIcon><IcFormat /></BigIcon>
              <BigLine>格式</BigLine>
              <BigLine><Caret /></BigLine>
            </BigCol>
          </Body>
          <Label>单元格</Label>
        </Group>

        <Group $w={229}>
          <Body>
            <SmallCol $w={93} $pl={7}>
              <SmallRow><Slot $w={16}><IcSigma /></Slot><Txt $ml={3}>自动求和</Txt><Slot $w={8} $ml={8}><Caret /></Slot></SmallRow>
              <SmallRow><Slot $w={16}><IcFillDown /></Slot><Txt $ml={3}>填充</Txt><Slot $w={6} $ml={3}><Caret /></Slot></SmallRow>
              <SmallRow><Slot $w={16}><IcEraser /></Slot><Txt $ml={3}>清除</Txt><Slot $w={6} $ml={3}><Caret /></Slot></SmallRow>
            </SmallCol>
            <BigCol $w={64}>
              <BigIcon><IcSort /></BigIcon>
              <BigLine>排序和筛选</BigLine>
              <BigLine><Caret /></BigLine>
            </BigCol>
            <BigCol $w={66}>
              <BigIcon><IcFind /></BigIcon>
              <BigLine>查找和选择</BigLine>
              <BigLine><Caret /></BigLine>
            </BigCol>
          </Body>
          <Label>编辑</Label>
        </Group>

        <Group $w={55}>
          <Body>
            <BigCol $w={54}>
              <BigIcon><IcInvoice /></BigIcon>
              <BigLine>发票</BigLine>
              <BigLine>查验</BigLine>
            </BigCol>
          </Body>
          <Label>发票查验</Label>
        </Group>

        <Collapse>
          <S w={8} h={6}><path d="M.5 5 4 1.500 7.500 5" stroke="#666" /></S>
        </Collapse>
      </Ribbon>

      <Qat>
        <QBtn $w={20} $ml={15}><IcSave /></QBtn>
        <QBtn $w={20} $ml={30}><IcRedo /></QBtn>
        <QBtn $w={10} $ml={4}><Caret $c="#bbb" /></QBtn>
        <QBtn $w={20} $ml={17}><IcUndo /></QBtn>
        <QBtn $w={10} $ml={3}><Caret /></QBtn>
        <QBtn $w={20} $ml={22}><IcPrintPrev /></QBtn>
        <QBtn $w={20} $ml={33}><IcPreview /></QBtn>
        <QBtn $w={10} $ml={34}><Caret $c="#d4d4d4" /></QBtn>
      </Qat>

      <FormulaRow>
        <NameBox>P2<Caret $c="#666" /></NameBox>
        <Dots>⋮</Dots>
        <FxBox>
          <Slot $w={38}><S w={11} h={11}><path d="M1 1l9 9M10 1l-9 9" stroke="#c4c4c4" strokeWidth="1.600" /></S></Slot>
          <Slot $w={35}><S w={13} h={11}><path d="M1 6l4 4 7-9" stroke="#c4c4c4" strokeWidth="1.800" /></S></Slot>
          <Slot $w={36}><FxMark>fx</FxMark></Slot>
        </FxBox>
        <Formula>=SUMIF(C3:C12,C3,N3:N12)<S w={8} h={5}><path d="M.5.500 4 4 7.500.500" stroke="#777" /></S></Formula>
      </FormulaRow>

      <SheetWrap>
        <Sheet />
        <VScroll>
          <VBtn />
          <VThumb />
          <VRest />
        </VScroll>
      </SheetWrap>

      <TabsBar>
        <NavArea>
          <Slot $w={12} $ml={23}><S w={6} h={9}><path d="M5 0v9L0 4.500z" fill="#c4c4c4" /></S></Slot>
          <Slot $w={12} $ml={17}><S w={6} h={9}><path d="M1 0v9l5-4.500z" fill="#c4c4c4" /></S></Slot>
        </NavArea>
        <TabSep />
        <SheetTab $w={62}>成绩表</SheetTab>
        <SheetTab $w={76} $on>员工信息</SheetTab>
        <SheetTab $w={64}>田字格</SheetTab>
        <TabSep />
        <SheetTab $w={111} $ml={1} $bg="#bdd7ee" $c="#111">XXX公司销售额</SheetTab>
        <TabSep $ml={2} />
        <SheetTab $w={58} $ml={2} $bg="#f4b183" $c="#111">课程表</SheetTab>
        <TabSep $ml={2} />
        <SheetTab $w={68}>Sheet5</SheetTab>
        <TabSep />
        <SheetTab $w={67}>Sheet1</SheetTab>
        <TabSep />
        <AddSheet>
          <S w={17} h={17}>
            <circle cx="8.500" cy="8.500" r="7.500" stroke="#777" />
            <path d="M4.500 8.500h8M8.500 4.500v8" stroke="#777" strokeWidth="1.500" />
          </S>
        </AddSheet>
        <HScroll>
          <HBtn $w={10} $ml="60px"><S w={5} h={8}><path d="M5 0v8L0 4z" fill="#666" /></S></HBtn>
          <HThumb />
          <HBtn $w={13} $ml="auto" $bg="#f4f4f4"><S w={5} h={8}><path d="M0 0v8l5-4z" fill="#666" /></S></HBtn>
        </HScroll>
        <Ime>EN<span>♪</span>简</Ime>
      </TabsBar>

      <Status>
        <span>就绪</span>
        <Txt $ml={19}>数字</Txt>
        <Slot $w={13} $ml={17}>
          <S w={13} h={13}>
            <rect x="0" y="0" width="6" height="6" fill="#666" />
            <path d="M3.500 5.500h9v7h-9z" stroke="#777" />
            <path d="M5 8h1.500M7.500 8H9M10 8h1.500M5 10.500h1.500M7.500 10.500H9M10 10.500h1.500" stroke="#777" />
          </S>
        </Slot>
        <ViewBtn $on $ml={1291}>
          <S w={14} h={14}><path d="M.5.500h13v13H.5zM5 .5v13M9.500 .5v13M.5 5h13M.5 9.500h13" stroke="#666" /></S>
        </ViewBtn>
        <ViewBtn $ml={2}>
          <S w={13} h={15}><path d="M.5.500h12v14H.5z" stroke="#666" /><path d="M3 4h7M3 7h7M3 10h7" stroke="#666" strokeWidth="1.300" /></S>
        </ViewBtn>
        <ViewBtn $ml={1}>
          <S w={14} h={14}><path d="M.5.500h13v11H.5zM7.500 .5v7.500h6" stroke="#666" /></S>
        </ViewBtn>
        <ZoomSign $w={10} $ml={4}>-</ZoomSign>
        <ZoomTrack><ZoomThumb /></ZoomTrack>
        <ZoomSign $w={12} $ml={2}>+</ZoomSign>
        <ZoomPct>70%</ZoomPct>
      </Status>

      <Stamp />
      <Arrows />
      <Watermark>
        <Logo />
        <WmText>
          <WmName>极光下载站</WmName>
          <WmUrl>www.xz<b>7</b>.com</WmUrl>
        </WmText>
      </Watermark>
    </Win>
  );
}
